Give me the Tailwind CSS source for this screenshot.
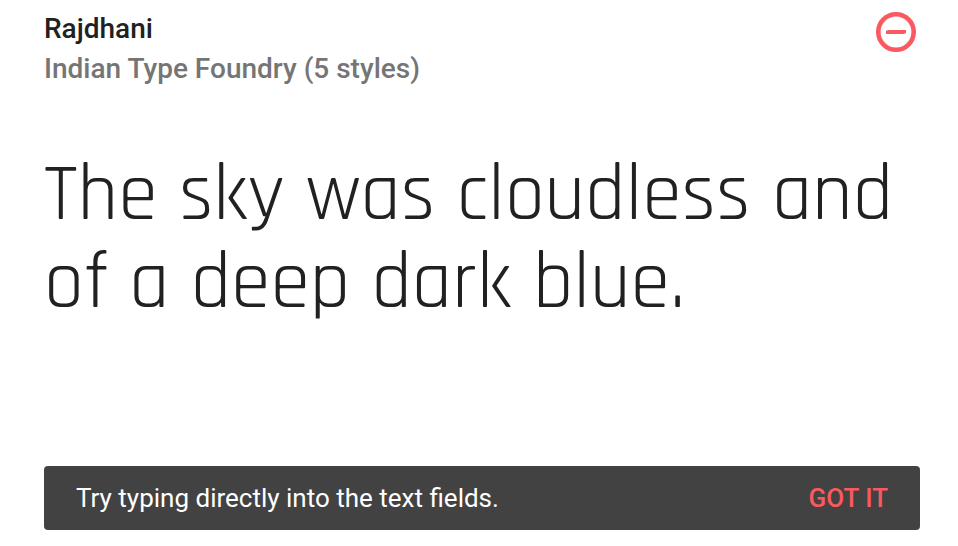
<!DOCTYPE html>
<html lang="en">
<head>
<meta charset="utf-8">
<meta name="viewport" content="width=device-width, initial-scale=1">
<title>Rajdhani</title>
<script src="https://cdn.jsdelivr.net/npm/@tailwindcss/browser@4"></script>
</head>
<body class="bg-white font-['Roboto',sans-serif] text-[#212121]">
<main class="flex min-h-screen flex-col pt-[9px] pr-[38px] pb-4 pl-11">
  <header class="flex items-start justify-between pr-1">
    <div class="text-[28px] leading-10 font-medium">
      <h1>Rajdhani</h1>
      <p class="text-[#757575]">Indian Type Foundry (5 styles)</p>
    </div>
    <button type="button" aria-label="Remove Rajdhani" class="mt-[3px] text-[#fa5a5f]">
      <svg class="size-10" viewBox="0 0 40 40" fill="none" stroke="currentColor" stroke-width="4.6"><circle cx="20" cy="20" r="17.7"/><path fill="currentColor" stroke="none" d="M10 18.7L13 18L30 18V21.3L27 22H10Z"/></svg>
    </button>
  </header>
  <div contenteditable="true" role="textbox" aria-label="Sample text" spellcheck="false" class="mt-[63px] font-['Rajdhani','Roboto',sans-serif] text-[80px] leading-[88px] font-normal outline-none">The sky was cloudless and of a deep dark blue.</div>
  <aside class="mt-auto flex h-16 items-center justify-between rounded bg-[#424242] px-8 text-[26px] leading-8">
    <p class="text-white">Try typing directly into the text fields.</p>
    <button type="button" class="font-medium text-[#fa5a5f]">GOT IT</button>
  </aside>
</main>
</body>
</html>
